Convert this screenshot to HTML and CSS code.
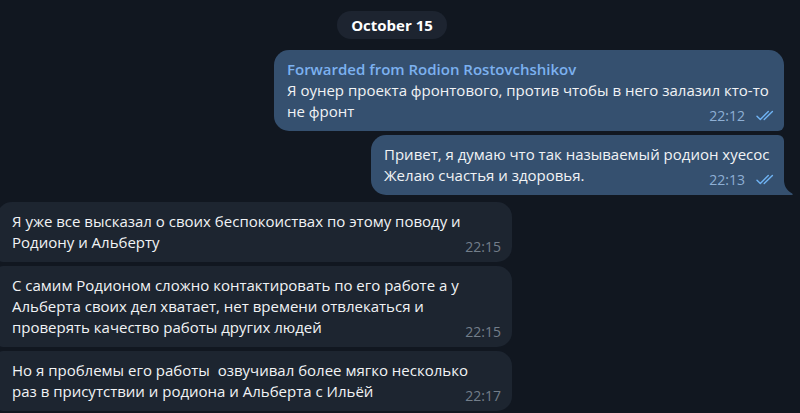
FILE: index.html
```html
<!DOCTYPE html>
<html>
  <head>
    <meta charset="utf-8">
    <meta name="viewport" content="width=device-width, initial-scale=1">
    <title>Chat</title>
    <link rel="stylesheet" href="styles.css">
  </head>
  <body>
    <div class="chat">
      <div class="date"><span>October 15</span></div>

      <div class="group out">
        <div class="msg first wide">
          <div class="fwd">Forwarded from Rodion Rostovchshikov</div>
          <div class="text">Я оунер проекта фронтового, против чтобы в него залазил кто-то<br>не фронт<span class="meta">22:12<svg class="ticks" viewBox="0 0 20 11"><path d="M1 6.2L4.3 9.6L12.3 1.4M8.2 9.6L16.4 1.4"/></svg></span></div>
        </div>
        <div class="msg last narrow">
          <div class="text">Привет, я думаю что так называемый родион хуесос<br>Желаю счастья и здоровья.<span class="meta">22:13<svg class="ticks" viewBox="0 0 20 11"><path d="M1 6.2L4.3 9.6L12.3 1.4M8.2 9.6L16.4 1.4"/></svg></span></div>
          <svg class="tail" viewBox="0 0 9 14"><path d="M0 0C0.4 5 2.6 9.6 8.2 12.4C8.9 12.8 8.8 14 8 14H0Z"/></svg>
        </div>
      </div>

      <div class="group in">
        <div class="msg first">
          <div class="text">Я уже все высказал о своих беспокоиствах по этому поводу и<br>Родиону и Альберту<span class="meta">22:15</span></div>
        </div>
        <div class="msg">
          <div class="text">С самим Родионом сложно контактировать по его работе а у<br>Альберта своих дел хватает, нет времени отвлекаться и<br>проверять качество работы других людей<span class="meta">22:15</span></div>
        </div>
        <div class="msg last">
          <div class="text">Но я проблемы его работы&nbsp; озвучивал более мягко несколько<br>раз в присутствии и родиона и Альберта с Ильёй<span class="meta">22:17</span></div>
        </div>
      </div>
    </div>
  </body>
</html>
```

FILE: styles.css
```css
body {
  margin: 0;
  background: #111720;
  color: #f1f3f5;
  font-family: "Open Sans", "DejaVu Sans", sans-serif;
  font-size: 15px;
  line-height: 21px;
  overflow: hidden;
}

.chat {
  display: flex;
  flex-direction: column;
  padding: 0 16px 0 0;
}

.date {
  display: flex;
  justify-content: center;
  margin: 11px 0 11px 0;
}

.date span {
  background: #1d2430;
  border-radius: 14px;
  padding: 0 14px;
  height: 28px;
  line-height: 28px;
  font-weight: 700;
  color: #ffffff;
}

.group {
  display: flex;
  flex-direction: column;
  gap: 4px;
}

.group.out {
  align-items: flex-end;
}

.group.in {
  align-items: flex-start;
  margin: 7px 0 0 -3px;
}

.msg {
  position: relative;
  padding: 9px 8px 9px 13px;
  border-radius: 15px;
  display: flow-root;
}

.out .msg {
  background: #35506f;
}

.in .msg {
  background: #1d2530;
  width: 492px;
  padding-left: 15px;
  border-radius: 6px 15px 15px 6px;
}

.in .msg.first {
  border-top-left-radius: 15px;
}

.out .msg.wide {
  width: 489px;
  border-bottom-right-radius: 6px;
}

.out .msg.narrow {
  width: 392px;
  border-top-right-radius: 6px;
  border-bottom-right-radius: 0;
}

.fwd {
  color: #7cb1ef;
  font-weight: 600;
}

.meta {
  float: right;
  display: flex;
  align-items: center;
  font-size: 14px;
  line-height: 21px;
  padding-top: 4px;
  margin: 0 0 -4px 12px;
  height: 21px;
}

.out .meta {
  color: #8eafd4;
}

.in .meta {
  color: #737e8a;
  margin-right: 3px;
}

.ticks {
  width: 20px;
  height: 11px;
  margin-left: 11px;
  fill: none;
  stroke: #6fb3f3;
  stroke-width: 1.4;
  stroke-linecap: round;
  stroke-linejoin: round;
}

.tail {
  position: absolute;
  right: -9px;
  bottom: 0;
  width: 9px;
  height: 14px;
  fill: #35506f;
}
```
